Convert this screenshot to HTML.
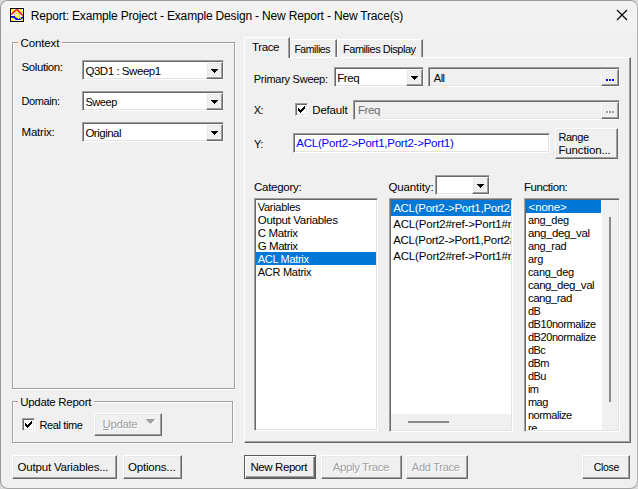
<!DOCTYPE html>
<html>
<head>
<meta charset="utf-8">
<title>Report: Example Project - Example Design - New Report - New Trace(s)</title>
<style>
html,body{margin:0;padding:0;}
body{width:638px;height:489px;overflow:hidden;background:#dadada;font-family:"Liberation Sans",sans-serif;font-size:11px;color:#000;position:relative;}
.win{position:absolute;left:0;top:0;width:636px;height:487px;border:1px solid;border-color:#98989f #b0b0b0 #a4a4a4 #9c959c;border-radius:8px;background:#f0f0f0;overflow:hidden;}
.win>*{margin-left:-1px;margin-top:-1px;}
.abs,.tx,.sunk,.btn,.grp,.hl{position:absolute;box-sizing:border-box;}
.titlebar{position:absolute;left:0;top:0;width:638px;height:31px;background:#f3f3f3;}
.tx{white-space:pre;line-height:0;}
.tx.dis{text-shadow:1px 1px 0 #fff;}
.grp{border:1px solid #a0a0a0;box-shadow:1px 1px 0 #fff, inset 1px 1px 0 #fff;}
.gl{position:absolute;background:#f0f0f0;height:4px;}
.sunk{border:1px solid;border-color:#a0a0a0 #fff #fff #a0a0a0;box-shadow:inset 1px 1px 0 #696969, inset -1px -1px 0 #e3e3e3;background:#fff;}
.sunk.dis{background:#f0f0f0;}
.btn{border:1px solid;border-color:#fff #696969 #696969 #fff;box-shadow:inset -1px -1px 0 #a0a0a0, inset 1px 1px 0 #e8e8e8;background:#f0f0f0;}
.btn.def{border-color:#5a5a5a;box-shadow:inset 1px 1px 0 #fff, inset -1px -1px 0 #696969, inset -2px -2px 0 #a0a0a0;}
.arr{position:absolute;width:7px;height:4px;background:linear-gradient(#000,#000) 0 0/7px 1px no-repeat,linear-gradient(#000,#000) 1px 1px/5px 1px no-repeat,linear-gradient(#000,#000) 2px 2px/3px 1px no-repeat,linear-gradient(#000,#000) 3px 3px/1px 1px no-repeat;}
.list{overflow:hidden;}
.list .in{position:absolute;left:1px;top:1px;right:1px;bottom:1px;overflow:hidden;}
.li{height:13px;line-height:15px;padding-left:2px;white-space:pre;font-size:11.5px;}
.li.sel{background:#0078d7;color:#fff;}
.q .li{height:16px;line-height:16px;}
.chk{position:absolute;box-sizing:border-box;width:13px;height:13px;border:1px solid;border-color:#a0a0a0 #fff #fff #a0a0a0;box-shadow:inset 1px 1px 0 #696969, inset -1px -1px 0 #e3e3e3;background:#fff;}
.chk svg{position:absolute;left:2px;top:2px;}
</style>
</head>
<body>
<div class="win">
<div class="titlebar"></div>
<!-- app icon -->
<svg class="abs" style="left:9px;top:7px" width="16" height="16" viewBox="-1 -1 16 16">
<rect x="-1" y="-1" width="16" height="16" fill="#fbfbfb"/>
<rect x="0" y="0" width="14" height="14" fill="#000"/>
<rect x="1" y="1" width="12" height="12" fill="#fff"/>
<g fill="#ffff00" shape-rendering="crispEdges">
<rect x="1" y="1" width="3" height="2"/><rect x="2" y="3" width="1" height="2"/><rect x="10" y="1" width="2" height="2"/><rect x="11" y="3" width="2" height="2"/>
<rect x="1" y="10" width="3" height="3"/><rect x="11" y="11" width="2" height="2"/><rect x="5" y="3" width="2" height="1"/><rect x="12" y="7" width="1" height="2"/>
</g>
<rect x="4.5" y="4.5" width="5" height="5.5" rx="1" fill="#ffff33" stroke="#c4c4c4" stroke-width="1"/>
<rect x="6" y="6" width="1.6" height="1.6" fill="#fff"/>
<path d="M1.3 6.6 L6 1.9 L7.6 1.9 L12.7 7.4" fill="none" stroke="#ff0000" stroke-width="1.45"/>
<path d="M1 8.9 L4 8.9 L6.2 11.1 L10 11.1 L13 9.2" fill="none" stroke="#0000ff" stroke-width="1.9"/>
<rect x="8" y="10" width="1" height="1" fill="#ffff00"/><rect x="10" y="10" width="1" height="1" fill="#ffff00"/>
</svg>
<!-- close X -->
<svg class="abs" style="left:616px;top:9px" width="12" height="12" viewBox="0 0 12 12"><path d="M1 1 L11 11 M11 1 L1 11" stroke="#000" stroke-width="1.15" fill="none"/></svg>

<!-- Context group -->
<div class="grp" style="left:12px;top:42px;width:223px;height:347px"></div>
<div class="gl" style="left:18px;top:41px;width:44px"></div>
<!-- combos -->
<div class="sunk" style="left:82px;top:60px;width:142px;height:20px"></div>
<div class="btn" style="left:206px;top:62px;width:17px;height:17px"></div><div class="arr" style="left:211px;top:69px"></div>
<div class="sunk" style="left:82px;top:91px;width:142px;height:20px"></div>
<div class="btn" style="left:206px;top:93px;width:17px;height:17px"></div><div class="arr" style="left:211px;top:100px"></div>
<div class="sunk" style="left:82px;top:122px;width:142px;height:20px"></div>
<div class="btn" style="left:206px;top:124px;width:17px;height:17px"></div><div class="arr" style="left:211px;top:131px"></div>

<!-- Update Report group -->
<div class="grp" style="left:12px;top:401px;width:221px;height:42px"></div>
<div class="gl" style="left:18px;top:400px;width:76px"></div>
<div class="chk" style="left:22px;top:418px"><svg width="7" height="7" viewBox="0 0 7 7" shape-rendering="crispEdges"><path d="M0 2h1v1h1v1h1v-1h1v-1h1v-1h1v-1h1v3h-1v1h-1v1h-1v1h-1v1h-1v-1h-1v-1h-1z" fill="#000"/></svg></div>
<div class="btn" style="left:94px;top:413px;width:68px;height:23px"></div>
<svg class="abs" style="left:145px;top:418px" width="12" height="8" viewBox="0 0 12 8"><path d="M1.5 2 L11.5 2 L6.5 7 Z" fill="#fff"/><path d="M0.5 1 L10.5 1 L5.5 6 Z" fill="#a0a0a0"/></svg>
<div class="abs" style="left:102.5px;top:429.4px;width:6px;height:1px;background:#a0a0a0;box-shadow:1px 1px 0 #fff"></div>

<!-- bottom-left buttons -->
<div class="btn" style="left:12px;top:455px;width:105px;height:24px"></div>
<div class="btn" style="left:123px;top:455px;width:59px;height:24px"></div>

<!-- Tab control -->
<div class="abs tabpage" style="left:244px;top:57px;width:387px;height:386px;border:1px solid;border-color:#fff #696969 #696969 #fff;box-shadow:inset -1px -1px 0 #a0a0a0;background:#f0f0f0"></div>
<div class="abs" style="left:289px;top:39px;width:48px;height:18px;border:1px solid;border-color:#fff #696969 transparent #fff;box-shadow:inset -1px 0 0 #a0a0a0;border-bottom:none"></div>
<div class="abs" style="left:337px;top:39px;width:86px;height:18px;border:1px solid;border-color:#fff #696969 transparent #fff;box-shadow:inset -1px 0 0 #a0a0a0;border-bottom:none"></div>
<div class="abs" style="left:244px;top:37px;width:46px;height:21px;border:1px solid;border-color:#fff #696969 transparent #fff;box-shadow:inset -1px 0 0 #a0a0a0;border-bottom:none;background:#f0f0f0"></div>

<!-- Primary sweep row -->
<div class="sunk" style="left:334px;top:67px;width:90px;height:20px"></div>
<div class="btn" style="left:406px;top:69px;width:17px;height:17px"></div><div class="arr" style="left:411px;top:76px"></div>
<div class="sunk dis" style="left:428px;top:67px;width:192px;height:20px"></div>
<div class="btn" style="left:601px;top:69px;width:18px;height:17px"></div>
<div class="abs" style="left:606px;top:79px;width:1.5px;height:2px;background:#00f;box-shadow:3px 0 0 #00f,6px 0 0 #00f"></div>
<!-- X row -->
<div class="chk" style="left:295px;top:103px"><svg width="7" height="7" viewBox="0 0 7 7" shape-rendering="crispEdges"><path d="M0 2h1v1h1v1h1v-1h1v-1h1v-1h1v-1h1v3h-1v1h-1v1h-1v1h-1v1h-1v-1h-1v-1h-1z" fill="#000"/></svg></div>
<div class="sunk dis" style="left:353px;top:100px;width:267px;height:20px"></div>
<div class="btn" style="left:601px;top:102px;width:18px;height:17px"></div>
<div class="abs" style="left:606px;top:111px;width:1.5px;height:2px;background:#a0a0a0;box-shadow:3px 0 0 #a0a0a0,6px 0 0 #a0a0a0"></div>
<!-- Y row -->
<div class="sunk" style="left:293px;top:133px;width:257px;height:20px"></div>
<div class="btn" style="left:555px;top:128px;width:63px;height:31px"></div>

<!-- small quantity combo -->
<div class="sunk" style="left:435px;top:175px;width:55px;height:20px"></div>
<div class="btn" style="left:472px;top:177px;width:17px;height:17px"></div><div class="arr" style="left:477px;top:184px"></div>

<!-- lists -->
<div class="sunk list" style="left:254px;top:198px;width:124px;height:233px"><div class="in">
<div class="li" style="font-size:11px;letter-spacing:-0.293px;padding-left:1.80px">Variables</div>
<div class="li" style="font-size:11.5px;letter-spacing:-0.310px;padding-left:1.80px">Output Variables</div>
<div class="li" style="font-size:11.5px;letter-spacing:-0.365px;padding-left:1.80px">C Matrix</div>
<div class="li" style="font-size:11.5px;letter-spacing:-0.456px;padding-left:1.80px">G Matrix</div>
<div class="li sel" style="font-size:11px;letter-spacing:-0.322px;padding-left:1.80px">ACL Matrix</div>
<div class="li" style="font-size:11px;letter-spacing:-0.281px;padding-left:1.80px">ACR Matrix</div>
</div></div>
<div class="sunk list q" style="left:389px;top:198px;width:124px;height:234px"><div class="in">
<div class="li sel" style="font-size:11.5px;letter-spacing:-0.276px;padding-left:2.20px">ACL(Port2-&gt;Port1,Port2-&gt;Port1)</div>
<div class="li" style="font-size:11.5px;letter-spacing:-0.165px;padding-left:2.20px">ACL(Port2#ref-&gt;Port1#ref,Port2#ref-&gt;Port1#ref)</div>
<div class="li" style="font-size:11.5px;letter-spacing:-0.276px;padding-left:2.20px">ACL(Port2-&gt;Port1,Port2#ref-&gt;Port1#ref)</div>
<div class="li" style="font-size:11.5px;letter-spacing:-0.165px;padding-left:2.20px">ACL(Port2#ref-&gt;Port1#ref,Port2-&gt;Port1)</div>
<div class="abs" style="left:0;bottom:0;width:120px;height:16px;background:#f0f0f0"></div>
<div class="abs" style="left:17px;bottom:7px;width:41px;height:2px;background:#8a8a8a"></div>
</div></div>
<div class="sunk list" style="left:524px;top:198px;width:96px;height:234px"><div class="in">
<div style="position:absolute;left:0;top:0;width:75px;">
<div class="li sel" style="font-size:11.5px;letter-spacing:-0.160px;padding-left:2.60px">&lt;none&gt;</div>
<div class="li" style="font-size:11px;letter-spacing:-0.251px;padding-left:1.90px">ang_deg</div>
<div class="li" style="font-size:11.5px;letter-spacing:-0.371px;padding-left:1.90px">ang_deg_val</div>
<div class="li" style="font-size:11px;letter-spacing:-0.259px;padding-left:1.90px">ang_rad</div>
<div class="li" style="font-size:11px;letter-spacing:-0.190px;padding-left:1.90px">arg</div>
<div class="li" style="font-size:11px;letter-spacing:-0.301px;padding-left:1.90px">cang_deg</div>
<div class="li" style="font-size:11.5px;letter-spacing:-0.442px;padding-left:1.90px">cang_deg_val</div>
<div class="li" style="font-size:11.5px;letter-spacing:-0.494px;padding-left:1.90px">cang_rad</div>
<div class="li" style="font-size:11px;letter-spacing:-0.500px;padding-left:1.90px">dB</div>
<div class="li" style="font-size:11px;letter-spacing:-0.421px;padding-left:1.90px">dB10normalize</div>
<div class="li" style="font-size:11px;letter-spacing:-0.421px;padding-left:1.90px">dB20normalize</div>
<div class="li" style="font-size:11px;letter-spacing:-0.500px;padding-left:1.90px">dBc</div>
<div class="li" style="font-size:11px;letter-spacing:-0.500px;padding-left:1.90px">dBm</div>
<div class="li" style="font-size:11px;letter-spacing:-0.500px;padding-left:1.90px">dBu</div>
<div class="li" style="font-size:11px;letter-spacing:-0.500px;padding-left:1.90px">im</div>
<div class="li" style="font-size:11px;letter-spacing:-0.500px;padding-left:1.90px">mag</div>
<div class="li" style="font-size:11px;letter-spacing:-0.433px;padding-left:1.90px">normalize</div>
<div class="li" style="font-size:11px;letter-spacing:-0.363px;padding-left:1.90px">re</div>
</div>
<div class="abs" style="right:0;top:0;width:16px;bottom:0;background:#f0f0f0"></div>
<div class="abs" style="left:83px;top:17px;width:2px;height:185px;background:#8a8a8a"></div>
</div></div>

<!-- bottom buttons -->
<div class="btn def" style="left:244px;top:455px;width:72px;height:24px"></div>
<div class="btn" style="left:321px;top:455px;width:81px;height:24px"></div>
<div class="btn" style="left:406px;top:455px;width:62px;height:24px"></div>
<div class="btn" style="left:582px;top:455px;width:48px;height:24px"></div>

<span class="tx" style="left:30.70px;top:16.00px;font-size:12px;letter-spacing:-0.171px;color:#000;">Report: Example Project - Example Design - New Report - New Trace(s)</span>
<span class="tx" style="left:20.50px;top:43.00px;font-size:11.5px;letter-spacing:-0.123px;color:#000;">Context</span>
<span class="tx" style="left:21.60px;top:67.40px;font-size:11.5px;letter-spacing:-0.420px;color:#000;">Solution:</span>
<span class="tx" style="left:21.60px;top:101.00px;font-size:11px;letter-spacing:-0.434px;color:#000;">Domain:</span>
<span class="tx" style="left:21.60px;top:132.20px;font-size:11.5px;letter-spacing:-0.234px;color:#000;">Matrix:</span>
<span class="tx" style="left:85.40px;top:71.10px;font-size:11.5px;letter-spacing:-0.449px;color:#000;">Q3D1 : Sweep1</span>
<span class="tx" style="left:85.40px;top:102.30px;font-size:11px;letter-spacing:-0.429px;color:#000;">Sweep</span>
<span class="tx" style="left:85.40px;top:133.20px;font-size:11.5px;letter-spacing:-0.496px;color:#000;">Original</span>
<span class="tx" style="left:20.20px;top:402.00px;font-size:11.5px;letter-spacing:-0.300px;color:#000;">Update Report</span>
<span class="tx" style="left:39.40px;top:424.90px;font-size:11px;letter-spacing:-0.368px;color:#000;">Real time</span>
<span class="tx dis" style="left:102.60px;top:424.10px;font-size:11.5px;letter-spacing:-0.397px;color:#a0a0a0;">Update</span>
<span class="tx" style="left:17.50px;top:467.00px;font-size:11.5px;letter-spacing:-0.189px;color:#000;">Output Variables...</span>
<span class="tx" style="left:128.00px;top:467.00px;font-size:11.5px;letter-spacing:-0.180px;color:#000;">Options...</span>
<span class="tx" style="left:252.10px;top:47.00px;font-size:11.5px;letter-spacing:-0.418px;color:#000;">Trace</span>
<span class="tx" style="left:294.40px;top:48.60px;font-size:10.5px;letter-spacing:-0.434px;color:#000;">Families</span>
<span class="tx" style="left:343.00px;top:48.60px;font-size:11px;letter-spacing:-0.465px;color:#000;">Families Display</span>
<span class="tx" style="left:253.70px;top:78.70px;font-size:11px;letter-spacing:-0.252px;color:#000;">Primary Sweep:</span>
<span class="tx" style="left:337.20px;top:77.50px;font-size:11.5px;letter-spacing:-0.417px;color:#000;">Freq</span>
<span class="tx" style="left:433.80px;top:77.50px;font-size:11px;letter-spacing:-0.500px;color:#000;">All</span>
<span class="tx" style="left:253.70px;top:110.00px;font-size:11px;letter-spacing:-0.500px;color:#000;">X:</span>
<span class="tx" style="left:312.30px;top:110.00px;font-size:11.5px;letter-spacing:-0.190px;color:#000;">Default</span>
<span class="tx" style="left:358.00px;top:110.00px;font-size:11.5px;letter-spacing:-0.417px;color:#6d6d6d;">Freq</span>
<span class="tx" style="left:254.00px;top:144.20px;font-size:11px;letter-spacing:-0.500px;color:#000;">Y:</span>
<span class="tx" style="left:296.30px;top:142.80px;font-size:11.5px;letter-spacing:-0.232px;color:#0000ff;">ACL(Port2-&gt;Port1,Port2-&gt;Port1)</span>
<span class="tx" style="left:558.40px;top:136.70px;font-size:11px;letter-spacing:-0.424px;color:#000;">Range</span>
<span class="tx" style="left:558.40px;top:149.60px;font-size:11.5px;letter-spacing:-0.130px;color:#000;">Function...</span>
<span class="tx" style="left:254.00px;top:186.80px;font-size:11.5px;letter-spacing:-0.283px;color:#000;">Category:</span>
<span class="tx" style="left:388.40px;top:187.40px;font-size:11.5px;letter-spacing:-0.103px;color:#000;">Quantity:</span>
<span class="tx" style="left:524.00px;top:186.80px;font-size:11.5px;letter-spacing:-0.438px;color:#000;">Function:</span>
<span class="tx" style="left:250.40px;top:467.00px;font-size:11.5px;letter-spacing:-0.402px;color:#000;">New Report</span>
<span class="tx dis" style="left:332.80px;top:467.00px;font-size:11.5px;letter-spacing:-0.414px;color:#a0a0a0;">Apply Trace</span>
<span class="tx dis" style="left:411.80px;top:467.00px;font-size:11px;letter-spacing:-0.253px;color:#a0a0a0;">Add Trace</span>
<span class="tx" style="left:593.70px;top:466.70px;font-size:10.5px;letter-spacing:-0.326px;color:#000;">Close</span>
</div>
</body>
</html>
